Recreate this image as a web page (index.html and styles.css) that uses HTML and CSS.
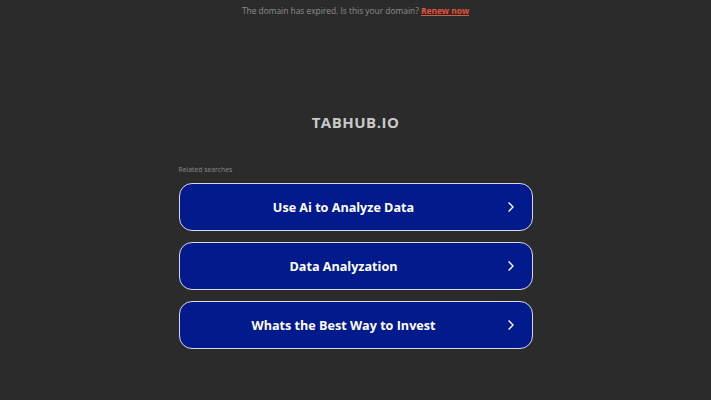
FILE: index.html
```html
<!DOCTYPE html>
<html>
<head>
<meta charset="utf-8">
<link rel="stylesheet" href="styles.css">
</head>
<body>
<div class="notice">The domain has expired. Is this your domain? <a class="renew" href="#">Renew now</a></div>
<main class="main">
  <h1 class="title">TABHUB.IO</h1>
  <section class="related">
    <div class="label">Related searches</div>
    <a class="item" href="#"><span class="text">Use Ai to Analyze Data</span><svg class="chev" viewBox="0 0 10 14" width="8" height="12"><path d="M2 1.5 L7.5 7 L2 12.5" fill="none" stroke="#fff" stroke-width="1.7"/></svg></a>
    <a class="item" href="#"><span class="text">Data Analyzation</span><svg class="chev" viewBox="0 0 10 14" width="8" height="12"><path d="M2 1.5 L7.5 7 L2 12.5" fill="none" stroke="#fff" stroke-width="1.7"/></svg></a>
    <a class="item" href="#"><span class="text">Whats the Best Way to Invest</span><svg class="chev" viewBox="0 0 10 14" width="8" height="12"><path d="M2 1.5 L7.5 7 L2 12.5" fill="none" stroke="#fff" stroke-width="1.7"/></svg></a>
  </section>
</main>
</body>
</html>
```
FILE: styles.css
```css
html, body {
  margin: 0;
  padding: 0;
  background: #2b2b2b;
  font-family: "Open Sans", "Noto Sans", sans-serif;
  height: 100%;
}
.notice {
  text-align: center;
  font-size: 8.4px;
  color: #8f8f8f;
  padding-top: 5px;
  line-height: 12px;
}
.renew {
  color: #e0533d;
  font-weight: 700;
  text-decoration: underline;
}
.main {
  display: flex;
  flex-direction: column;
  align-items: center;
}
.title {
  margin: 94px 0 0;
  font-size: 15px;
  font-weight: 700;
  color: #c9c9c9;
  letter-spacing: 0.5px;
  line-height: 22px;
}
.related {
  width: 354px;
  margin-top: 32px;
  display: flex;
  flex-direction: column;
  gap: 11px;
}
.label {
  font-size: 6.8px;
  color: #8a8a8a;
  line-height: 10px;
  margin-bottom: -3px;
}
.item {
  position: relative;
  height: 46px;
  box-sizing: content-box;
  padding-right: 24px;
  border: 1.5px solid #d9d9e6;
  border-radius: 13px;
  background: #021a8c;
  display: flex;
  align-items: center;
  justify-content: center;
  text-decoration: none;
}
.text {
  color: #fff;
  font-weight: 700;
  font-size: 12.6px;
}
.chev {
  position: absolute;
  right: 17px;
  top: 50%;
  margin-top: -6px;
}
```
